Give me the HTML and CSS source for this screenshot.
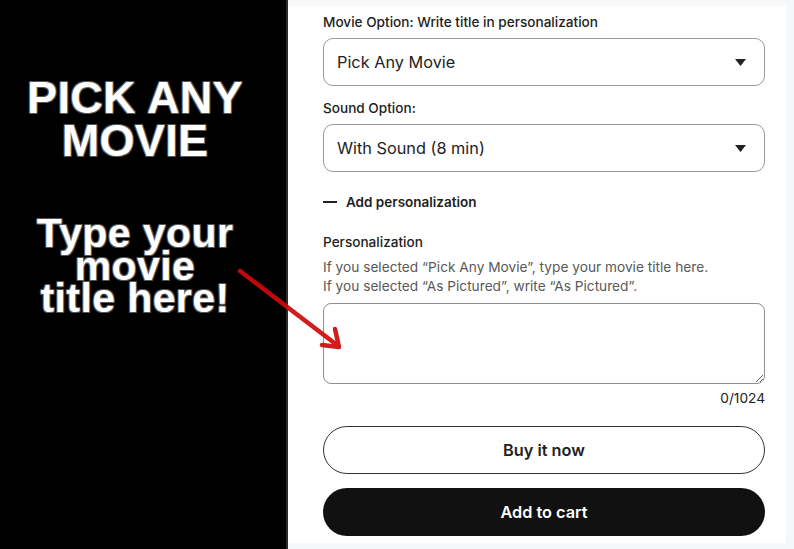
FILE: index.html
```html
<!DOCTYPE html>
<html lang="en">
<head>
    <meta charset="UTF-8">
    <title>Pick Any Movie</title>
    <link rel="stylesheet" href="styles.css">
</head>
<body>
    <div class="page">
        <div class="promo">
            <div class="promo-title">PICK ANY<br>MOVIE</div>
            <div class="promo-sub">Type your<br>movie<br>title here!</div>
        </div>

        <div class="shop">
            <div class="card">
                <div class="label">Movie Option: Write title in personalization</div>
                <div class="select">
                    <span>Pick Any Movie</span>
                    <svg class="caret" width="11" height="7" viewBox="0 0 11 7"><path d="M0 0h11L5.5 7z" fill="#222"/></svg>
                </div>

                <div class="label label-gap">Sound Option:</div>
                <div class="select">
                    <span>With Sound (8 min)</span>
                    <svg class="caret" width="11" height="7" viewBox="0 0 11 7"><path d="M0 0h11L5.5 7z" fill="#222"/></svg>
                </div>

                <div class="toggle">
                    <span class="dash"></span>
                    Add personalization
                </div>

                <div class="label personal-label">Personalization</div>
                <div class="help">
                    If you selected “Pick Any Movie”, type your movie title here.<br>
                    If you selected “As Pictured”, write “As Pictured”.
                </div>
                <textarea class="personal-input"></textarea>
                <div class="counter">0/1024</div>

                <button class="btn btn-outline">Buy it now</button>
                <button class="btn btn-dark">Add to cart</button>
            </div>
        </div>

        <svg class="arrow" width="794" height="549" viewBox="0 0 794 549">
            <g stroke="#d00a0a" stroke-width="4.5" stroke-linecap="round" stroke-linejoin="round" fill="none" opacity="0.92">
                <line x1="240" y1="271" x2="337" y2="345"/>
                <polyline points="335,329 339,347 322,345"/>
            </g>
        </svg>
    </div>
</body>
</html>
```

FILE: styles.css
```css
body {
    margin: 0;
    font-family: Inter, "Liberation Sans", sans-serif;
    color: #222;
}

.page {
    position: relative;
    display: flex;
    width: 794px;
    height: 549px;
    overflow: hidden;
}

.promo {
    width: 270px;
    padding: 76px 16px 0 0;
    background: #000;
    border-right: 2px solid #2b2b2b;
    font-family: "Liberation Sans", Arial, sans-serif;
    font-weight: bold;
    color: #fff;
    text-align: center;
    text-shadow: -1px -1px 0 #555, 1px -1px 0 #555, -1px 1px 0 #555, 1px 1px 0 #555;
}

.promo-title {
    font-size: 45px;
    line-height: 43px;
    letter-spacing: 0.3px;
}

.promo-sub {
    margin-top: 55px;
    font-size: 41px;
    line-height: 32.5px;
    letter-spacing: 0.4px;
}

.shop {
    flex: 1;
    background: #f6f7f9;
    padding: 6px 8px 6px 0;
}

.card {
    height: 100%;
    box-sizing: border-box;
    background: #fff;
    padding: 7px 21px 0 35px;
}

.label {
    font-size: 13.6px;
    font-weight: 500;
    line-height: 18px;
    margin-bottom: 7px;
}

.label-gap {
    margin-top: 13px;
}

.select {
    display: flex;
    align-items: center;
    justify-content: space-between;
    height: 48px;
    box-sizing: border-box;
    padding: 0 18px 0 13px;
    border: 1px solid #9a9a9a;
    border-radius: 10px;
    font-size: 16.3px;
}

.toggle {
    display: flex;
    align-items: center;
    gap: 9px;
    margin-top: 21px;
    font-size: 13.5px;
    font-weight: 600;
    line-height: 18px;
}

.dash {
    width: 14px;
    height: 2px;
    background: #222;
}

.personal-label {
    margin-top: 22px;
    margin-bottom: 7px;
}

.help {
    font-size: 13.7px;
    line-height: 19px;
    color: #595959;
}

.personal-input {
    display: block;
    width: 100%;
    height: 81px;
    box-sizing: border-box;
    margin-top: 7px;
    border: 1px solid #8f8f8f;
    border-radius: 8px;
    font-family: inherit;
}

.counter {
    margin-top: 5px;
    text-align: right;
    font-size: 13.7px;
    line-height: 18px;
}

.btn {
    display: block;
    width: 100%;
    height: 48px;
    border-radius: 24px;
    font-family: inherit;
    font-size: 16.3px;
    font-weight: 600;
    cursor: pointer;
}

.btn-outline {
    margin-top: 19px;
    background: #fff;
    color: #222;
    border: 1px solid #333;
}

.btn-dark {
    margin-top: 14px;
    background: #111;
    color: #fff;
    border: none;
}

.arrow {
    position: absolute;
    left: 0;
    top: 0;
    pointer-events: none;
}
```
